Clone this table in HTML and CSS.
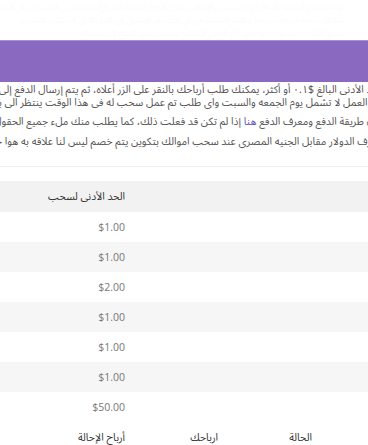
FILE: index.html
```html
<!DOCTYPE html>
<html lang="ar" dir="rtl">
<head>
<meta charset="utf-8">
<link rel="stylesheet" href="styles.css">
</head>
<body>
<div class="page">
  <div class="ghost">
    <span class="gline">لوحة التحكم الخاصة بك الأرباح والسحب والإحالات وطرق الدفع المتاحة لجميع المستخدمين المسجلين في الموقع</span>
    <span class="gline">يمكنك متابعة أرباحك من هنا وطلب السحب في أي وقت بعد الوصول إلى الحد الأدنى المطلوب للسحب</span>
    <span class="gline">جميع الطلبات تتم مراجعتها خلال أيام العمل الرسمية وسيتم إرسال المبلغ إلى حسابك</span>
  </div>
  <div class="banner"></div>
  <div class="notes">
    <p class="note">
      <span class="line">الحد الأدنى البالغ $٠.١ أو أكثر، يمكنك طلب أرباحك بالنقر على الزر أعلاه، ثم يتم إرسال الدفع إلى حساب السحب الخاص بك خلال أيام</span>
      <span class="line">أيام العمل لا تشمل يوم الجمعه والسبت واى طلب تم عمل سحب له فى هذا الوقت ينتظر الى يوم الأحد التالي</span>
    </p>
    <p class="note">
      <span class="line">ملء طريقة الدفع ومعرف الدفع <a class="link" href="#">هنا</a> إذا لم تكن قد فعلت ذلك، كما يطلب منك ملء جميع الحقول المطلوبة</span>
    </p>
    <p class="note">
      <span class="line">لصرف الدولار مقابل الجنيه المصرى عند سحب اموالك بتكوين يتم خصم ليس لنا علاقه به هوا خصم البنك</span>
    </p>
  </div>

  <div class="table withdraw">
    <div class="row head">
      <div class="cell"></div><div class="cell"></div><div class="cell"></div><div class="cell">الحد الأدنى لسحب</div>
    </div>
    <div class="row"><div class="cell"></div><div class="cell"></div><div class="cell"></div><div class="cell num">$1.00</div></div>
    <div class="row alt"><div class="cell"></div><div class="cell"></div><div class="cell"></div><div class="cell num">$1.00</div></div>
    <div class="row"><div class="cell"></div><div class="cell"></div><div class="cell"></div><div class="cell num">$2.00</div></div>
    <div class="row alt"><div class="cell"></div><div class="cell"></div><div class="cell"></div><div class="cell num">$1.00</div></div>
    <div class="row"><div class="cell"></div><div class="cell"></div><div class="cell"></div><div class="cell num">$1.00</div></div>
    <div class="row alt"><div class="cell"></div><div class="cell"></div><div class="cell"></div><div class="cell num">$1.00</div></div>
    <div class="row"><div class="cell"></div><div class="cell"></div><div class="cell"></div><div class="cell num">$50.00</div></div>
  </div>

  <div class="table earnings">
    <div class="row head2">
      <div class="cell"></div><div class="cell">الحالة</div><div class="cell">ارباحك</div><div class="cell">أرباح الإحالة</div>
    </div>
  </div>
</div>
</body>
</html>
```
FILE: styles.css
```css
html, body {
  margin: 0;
  padding: 0;
  background: #fff;
  overflow: hidden;
}
body {
  direction: rtl;
  font-family: "Noto Sans Arabic", "DejaVu Sans", "Noto Sans", sans-serif;
  color: #555;
}
.page {
  width: 620px;
  margin-right: -16px;
}
.ghost {
  height: 40px;
  padding-top: 1px;
  box-sizing: border-box;
  display: flex;
  flex-direction: column;
  overflow: hidden;
}
.gline {
  display: block;
  white-space: nowrap;
  font-size: 8px;
  line-height: 13px;
  color: #fcfcfc;
  margin-right: 40px;
}
.banner {
  height: 42px;
  background: #8a69c1;
  border-top: 1px solid #a890d2;
  box-sizing: border-box;
}
.notes {
  padding-top: 2px;
}
.note {
  margin: 0 0 7px;
  font-size: 10.5px;
  line-height: 12.5px;
  color: #555;
}
.line {
  display: block;
  white-space: nowrap;
}
.link {
  color: #6552b8;
  text-decoration: none;
}
.withdraw {
  margin-top: 18px;
  border-top: 1px solid #eeeeee;
  padding-top: 14px;
}
.table {
  display: flex;
  flex-direction: column;
}
.row {
  display: grid;
  grid-template-columns: 72px 94px 93px 200px;
  height: 30px;
  align-items: center;
}
.row.head {
  height: 31px;
  background: #f2f2f2;
  color: #333;
  font-size: 10.5px;
}
.row.alt {
  background: #f6f6f6;
}
.cell {
  text-align: right;
  white-space: nowrap;
}
.num {
  font-family: "Open Sans", "Liberation Sans", sans-serif;
  font-size: 10.5px;
  color: #777;
}
.head2 {
  height: 32px;
  color: #333;
  font-size: 10.5px;
}
```
